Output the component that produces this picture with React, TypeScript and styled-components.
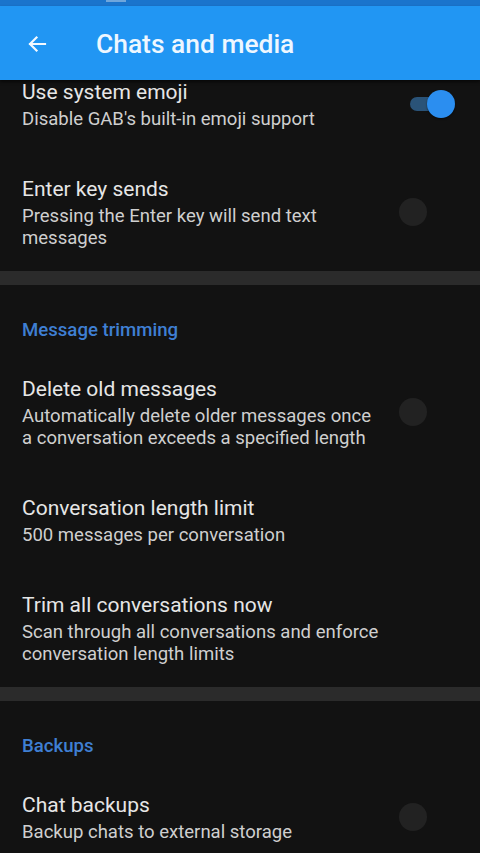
import React, { ReactElement } from 'react';
import styled, { createGlobalStyle } from 'styled-components';

const GlobalStyle = createGlobalStyle`
  html, body {
    margin: 0;
    padding: 0;
    background: #121212;
  }
  body {
    font-family: Roboto, "Noto Sans", sans-serif;
    -webkit-font-smoothing: antialiased;
  }
`;

type Pref = {
  title: string;
  summary: string;
  toggle?: 'on' | 'off';
};

type Section = {
  header?: string;
  items: Pref[];
};

const sections: Section[] = [
  {
    items: [
      { title: 'Use system emoji', summary: "Disable GAB's built-in emoji support", toggle: 'on' },
      { title: 'Enter key sends', summary: 'Pressing the Enter key will send text messages', toggle: 'off' },
    ],
  },
  {
    header: 'Message trimming',
    items: [
      {
        title: 'Delete old messages',
        summary: 'Automatically delete older messages once a conversation exceeds a specified length',
        toggle: 'off',
      },
      { title: 'Conversation length limit', summary: '500 messages per conversation' },
      {
        title: 'Trim all conversations now',
        summary: 'Scan through all conversations and enforce conversation length limits',
      },
    ],
  },
  {
    header: 'Backups',
    items: [{ title: 'Chat backups', summary: 'Backup chats to external storage', toggle: 'off' }],
  },
];

export default function App(): ReactElement {
  return (
    <Screen>
      <GlobalStyle />
      <StatusBar>
        <StatusMark />
      </StatusBar>
      <AppBar>
        <BackButton aria-label="Back">
          <svg width="24" height="24" viewBox="0 0 24 24" fill="none">
            <path d="M20 12H5M11.5 5.5L5 12l6.5 6.5" stroke="#f4f9ff" strokeWidth="2.2" strokeLinecap="square" />
          </svg>
        </BackButton>
        <AppTitle>Chats and media</AppTitle>
      </AppBar>
      <Viewport>
        <List>
          {sections.map((section, si) => (
            <React.Fragment key={si}>
              {si > 0 && <Divider />}
              {section.header && <CategoryHeader>{section.header}</CategoryHeader>}
              {section.items.map((item) => (
                <Row key={item.title}>
                  <TextBlock>
                    <RowTitle>{item.title}</RowTitle>
                    <RowSummary>{item.summary}</RowSummary>
                  </TextBlock>
                  {item.toggle && (
                    <Switch>
                      <Track $on={item.toggle === 'on'} />
                      <Thumb $on={item.toggle === 'on'} />
                    </Switch>
                  )}
                </Row>
              ))}
            </React.Fragment>
          ))}
        </List>
      </Viewport>
    </Screen>
  );
}

const Screen = styled.div`
  width: 480px;
  height: 853px;
  display: flex;
  flex-direction: column;
  background: #121212;
  overflow: hidden;
`;

const StatusBar = styled.div`
  height: 6px;
  background: #1a74cc;
  position: relative;
`;

const StatusMark = styled.div`
  position: absolute;
  left: 106px;
  top: 0;
  width: 20px;
  height: 2px;
  background: #6fa6dc;
`;

const AppBar = styled.header`
  height: 74px;
  background: #2196f3;
  display: flex;
  align-items: center;
  box-shadow: 0 2px 3px rgba(0, 0, 0, 0.6);
  position: relative;
  z-index: 1;
`;

const BackButton = styled.div`
  width: 24px;
  height: 24px;
  margin-left: 25px;
  margin-top: 2px;
  display: flex;
`;

const AppTitle = styled.h1`
  margin: 1px 0 0 47px;
  font-family: Roboto, sans-serif;
  font-weight: 500;
  font-size: 26.4px;
  color: #eef7ff;
`;

const Viewport = styled.main`
  flex: 1;
  overflow: hidden;
`;

const List = styled.div`
  margin-top: -25px;
`;

const Row = styled.div`
  display: flex;
  align-items: center;
  padding: 23px 22px 22px 22px;
`;

const TextBlock = styled.div`
  flex: 1;
  max-width: 360px;
`;

const RowTitle = styled.div`
  font-size: 21px;
  line-height: 28px;
  color: #e6e6e6;
`;

const RowSummary = styled.div`
  margin-top: 2px;
  font-size: 18.55px;
  line-height: 22px;
  color: #cfcfcf;
`;

const Divider = styled.div`
  height: 14px;
  background: #2b2b2b;
`;

const CategoryHeader = styled.div`
  padding: 35px 22px 12px;
  font-size: 18.6px;
  line-height: 20px;
  font-weight: 500;
  color: #3f7fd3;
`;

const Switch = styled.div`
  position: relative;
  width: 46px;
  height: 30px;
  margin-right: 2px;
  margin-left: auto;
  flex-shrink: 0;
`;

const Track = styled.div<{ $on: boolean }>`
  position: absolute;
  left: 0;
  right: 6px;
  top: 8px;
  height: 14px;
  border-radius: 7px;
  background: ${({ $on }) => ($on ? '#2a5378' : 'transparent')};
`;

const Thumb = styled.div<{ $on: boolean }>`
  position: absolute;
  top: 1px;
  left: ${({ $on }) => ($on ? '17px' : '-11px')};
  width: 28px;
  height: 28px;
  border-radius: 50%;
  background: ${({ $on }) => ($on ? '#2b8ef0' : '#222222')};
  box-shadow: ${({ $on }) => ($on ? '0 1px 2px rgba(0,0,0,0.5)' : 'none')};
`;
